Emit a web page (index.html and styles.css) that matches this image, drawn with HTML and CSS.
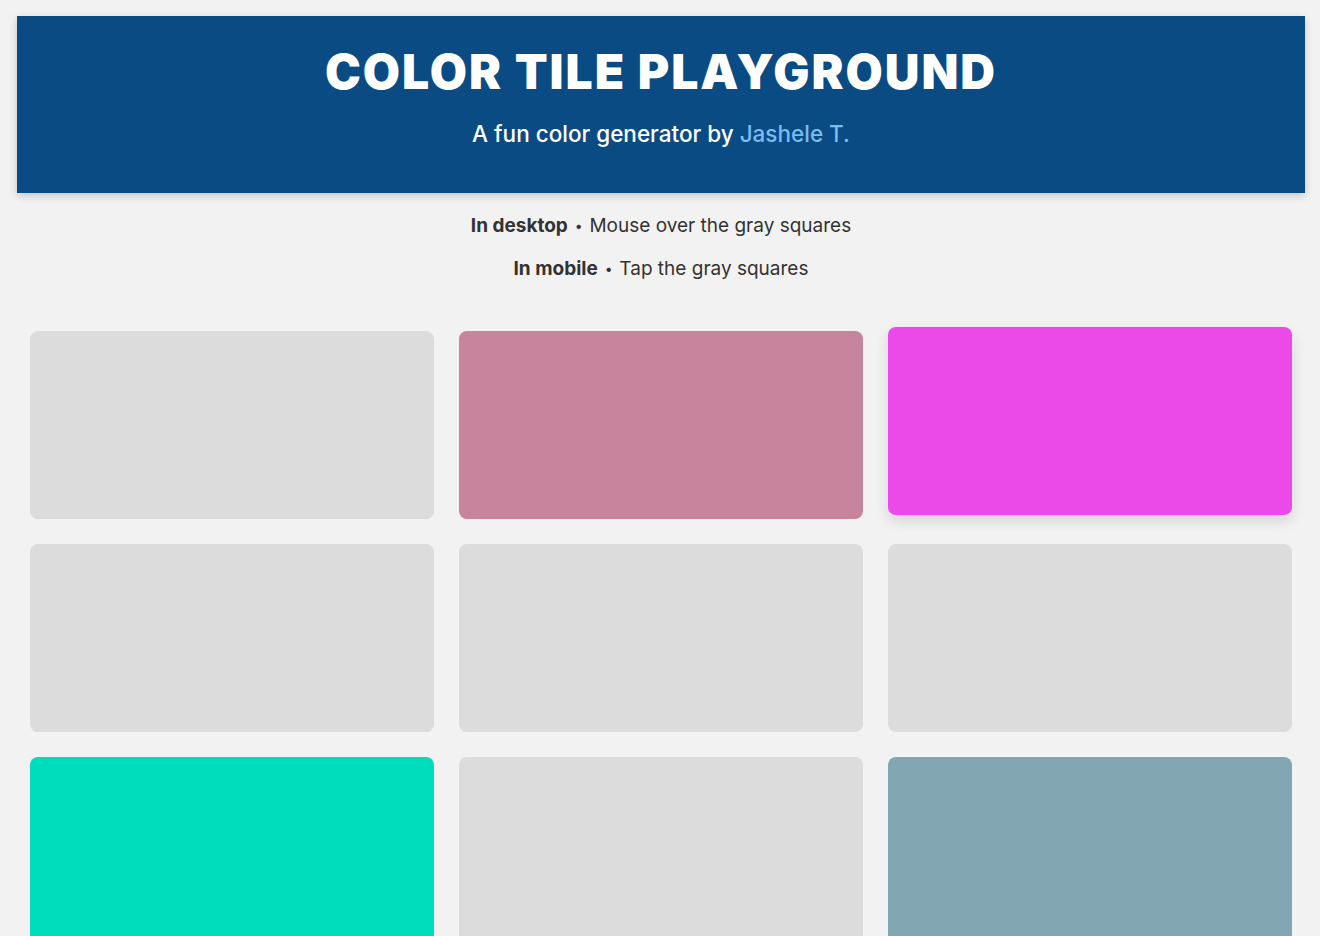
FILE: index.html
```html
<!DOCTYPE html>
<html lang="en">
<head>
<meta charset="utf-8">
<title>Color Tile Playground</title>
<link rel="stylesheet" href="styles.css">
</head>
<body>
<header class="banner">
  <h1 class="title">COLOR TILE PLAYGROUND</h1>
  <p class="subtitle">A fun color generator by <a class="author" href="#">Jashele T.</a></p>
</header>
<section class="instructions">
  <p><strong>In desktop</strong> <span class="dot">•</span> Mouse over the gray squares</p>
  <p><strong>In mobile</strong> <span class="dot">•</span> Tap the gray squares</p>
</section>
<main class="grid">
  <div class="tile"></div>
  <div class="tile tile-pink"></div>
  <div class="tile tile-magenta tile-lifted"></div>
  <div class="tile"></div>
  <div class="tile"></div>
  <div class="tile"></div>
  <div class="tile tile-teal"></div>
  <div class="tile"></div>
  <div class="tile tile-steel"></div>
</main>
</body>
</html>
```
FILE: styles.css
```css
* { box-sizing: border-box; }
html, body { margin: 0; padding: 0; }
body {
  background: #f2f2f2;
  font-family: Inter, "Noto Sans", sans-serif;
  color: #333;
  padding: 16px 15px 0 17px;
}
.banner {
  background: #0b4b84;
  color: #fff;
  text-align: center;
  padding: 26px 20px 44px;
  box-shadow: 0 3px 8px rgba(0,0,0,0.18);
}
.title {
  margin: 0;
  font-size: 48px;
  font-weight: 900;
  letter-spacing: 2px;
  line-height: 60px;
}
.subtitle {
  margin: 17px 0 0;
  font-size: 22.5px;
  font-weight: 500;
  line-height: 30px;
}
.author { color: #79bcf0; text-decoration: none; }
.instructions {
  text-align: center;
  font-size: 19px;
  padding-top: 21px;
}
.instructions p { margin: 0 0 19px; line-height: 24px; }
.instructions strong { font-weight: 700; }
.dot { font-size: 14px; vertical-align: 1px; margin: 0 1.5px; }
.grid {
  display: grid;
  grid-template-columns: repeat(3, 1fr);
  gap: 25px 25px;
  margin: 50px 13px 0 13px;
}
.tile {
  height: 188px;
  background: #dcdcdc;
  border-radius: 8px;
}
.tile-pink { background: #c6849d; }
.tile-magenta { background: #ec4ae8; }
.tile-teal { background: #00ddbc; }
.tile-steel { background: #82a6b2; }
.tile-lifted {
  transform: translateY(-4px);
  box-shadow: 0 6px 14px rgba(0,0,0,0.12);
}
```
